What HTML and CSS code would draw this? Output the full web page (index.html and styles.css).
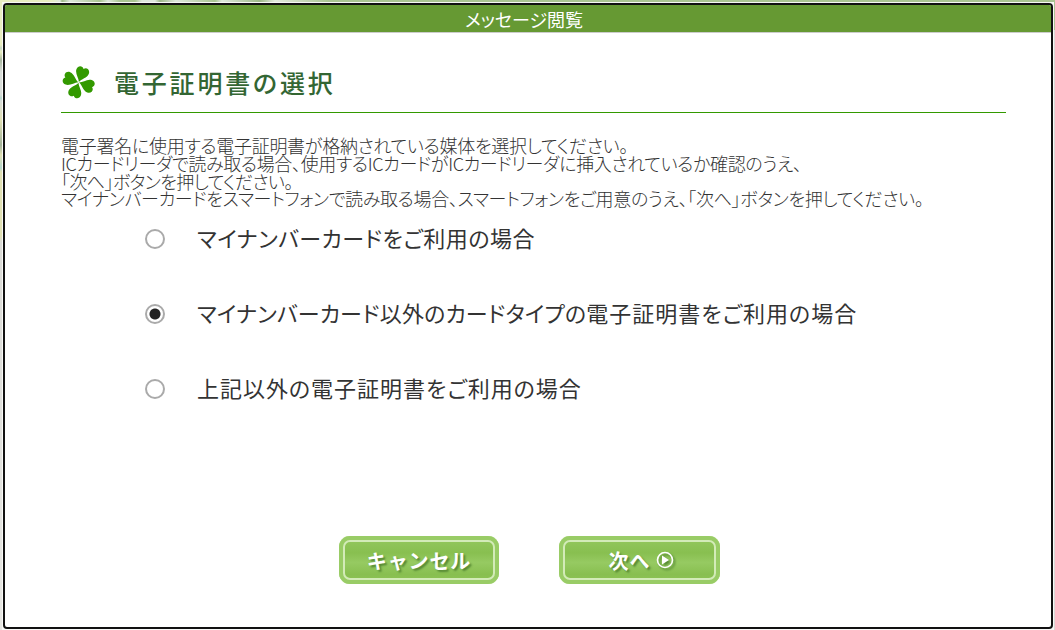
FILE: index.html
```html
<!DOCTYPE html>
<html lang="ja">
    <head>
        <title>メッセージ閲覧</title>
        <meta charset="utf-8">
        <link rel="stylesheet" href="styles.css">
    </head>
    <body>
        <div id="dialog">
            <div class="title_bar"><span>メッセージ閲覧</span></div>
            <div class="content">
                <div class="heading">
                    <svg class="clover" viewBox="0 0 34 34" width="34" height="34">
                        <g transform="translate(17.7 16.3) rotate(20)" fill="#339900">
                            <path id="leaf" d="M0 -0.4 C-1.2 -4 -6.6 -7 -6.6 -11.5 C-6.6 -15.8 -2 -17.2 0 -14.2 C2 -17.2 6.6 -15.8 6.6 -11.5 C6.6 -7 1.2 -4 0 -0.4Z"/>
                            <use href="#leaf" transform="rotate(90)"/>
                            <use href="#leaf" transform="rotate(180)"/>
                            <use href="#leaf" transform="rotate(270)"/>
                        </g>
                    </svg>
                    <h1>電子証明書の選択</h1>
                </div>
                <div class="message">
                    <div class="line1">電子署名に使用する電子証明書が格納されている媒体を選択してください。</div>
                    <div class="line2">ICカードリーダで読み取る場合、使用するICカードがICカードリーダに挿入されているか確認のうえ、</div>
                    <div class="line3">「次へ」ボタンを押してください。</div>
                    <div class="line4">マイナンバーカードをスマートフォンで読み取る場合、スマートフォンをご用意のうえ、「次へ」ボタンを押してください。</div>
                </div>
                <div class="options">
                    <label><input type="radio" name="card"><span class="option1">マイナンバーカードをご利用の場合</span></label>
                    <label><input type="radio" name="card" checked><span class="option2"><span class="card_type">マイナンバーカード以外のカードタイプの</span>電子証明書をご利用の場合</span></label>
                    <label><input type="radio" name="card"><span class="option3">上記以外の電子証明書をご利用の場合</span></label>
                </div>
                <div class="buttons">
                    <button><span class="cancel">キャンセル</span></button>
                    <button class="next"><span>次へ</span>
                        <svg class="arrow" viewBox="0 0 18 18" width="18" height="18">
                            <circle cx="9" cy="9" r="7.5" fill="none" stroke="#fff" stroke-width="1.6"/>
                            <path d="M6 4.5 L13 9 L6 13.5Z" fill="#fff"/>
                        </svg>
                    </button>
                </div>
            </div>
        </div>
    </body>
</html>
```
FILE: styles.css
```css
* {
    box-sizing: border-box;
}
body {
    margin: 0;
    height: 630px;
    padding: 3px 2px 1px 3px;
    overflow: hidden;
    /* edges of the page behind the dialog */
    background: linear-gradient(90deg, #e8edc0 50px, #dfe8dd 60px, #9db889 62px, #dfe8dd 70px, #a9c492 100px, #dfe8dd 108px, #a9c492 120px, #a9c492 135px, #dfe8dd 142px, #dfe8dd 155px, #9db889 160px, #dfe8dd 176px, #a9c492 215px, #dfe8dd 222px, #9db889 260px, #e4ebdf 275px, #a9c492 330px) 0 0 / 1055px 2px no-repeat,
                linear-gradient(#a9c492, #a9c492) 1054px 0 / 1px 30px no-repeat,
                linear-gradient(#e8edc0 0px, #e8edc0 45px, #c5d6c5 48px, #e8edc0 52px, #a9b8a0 60px, #d8dcd8 72px, #d8dcd8 95px, #b5d6cc 98px, #d8dcd8 101px, #e0e0b4 120px, #a3b39a 145px, #e0e0b4 155px, #b5d6cc 168px, #e0e0b4 172px, #e0e0b4 236px, #dadad6 242px, #e6e6e2 630px) 0 0 / 2px 630px no-repeat,
                linear-gradient(#dadad6, #dadad6) 1054px 30px / 1px 600px no-repeat,
                #f8f8f6;
    font-family: "Noto Sans CJK JP", sans-serif;
    font-feature-settings: "palt";
    color: #333;
}
#dialog {
    height: 626px;
    border: 2px solid #111;
    border-radius: 4px;
    background-color: white;
    overflow: hidden;
}
.title_bar {
    height: 28px;
    padding-right: 8px;
    border-bottom: 1px solid #ccc;
    background-color: #669933;
    color: white;
    font-size: 18px;
    line-height: 29px;
    text-align: center;
}
.content {
    padding: 0 45px 0 56px;
}
.heading {
    display: flex;
    align-items: center;
    height: 80px;
    padding-top: 20px;
    border-bottom: 1px solid #339900;
}
h1 {
    margin: 0 0 2px 19px;
    color: #336633;
    font-size: 25px;
    font-weight: 500;
    line-height: 36px;
    letter-spacing: 2.8px;
}
.message {
    padding-top: 24px;
    font-size: 18px;
    font-weight: 300;
    line-height: 17.8px;
    white-space: nowrap;
}
.line1 {
    letter-spacing: -0.28px;
}
.line2 {
    letter-spacing: -0.34px;
}
.line3 {
    letter-spacing: -0.6px;
}
.line4 {
    letter-spacing: -0.32px;
}
.options {
    padding: 13px 0 0 84px;
}
.options label {
    display: flex;
    align-items: center;
    height: 36px;
    margin-bottom: 39px;
    font-size: 22px;
    line-height: 36px;
    white-space: nowrap;
}
.options span {
    padding-bottom: 4px;
    letter-spacing: 0.5px;
}
.options .option2 {
    letter-spacing: 1px;
}
.options .card_type {
    letter-spacing: 0.18px;
}
.options .option3 {
    letter-spacing: 0.98px;
}
input {
    appearance: none;
    width: 20px;
    height: 20px;
    margin: 0 32px 0 0;
    border: 2px solid #aaa;
    border-radius: 50%;
    background: white;
}
input:checked {
    background: radial-gradient(circle at 50% 50%, #222 5px, white 6px);
}
.buttons {
    display: flex;
    gap: 60px;
    padding: 90px 0 0 278px;
}
button {
    display: flex;
    align-items: center;
    justify-content: center;
    width: 160px;
    height: 48px;
    padding: 0;
    border: none;
    border-radius: 11px;
    background: linear-gradient(#95c960, #88bf50 35%, #96ca62 55%, #88bf50 80%, #8ec457);
    box-shadow: inset 0 0 0 4px #99cc66, inset 0 0 0 6px #d3ebb8;
    color: white;
    font-family: inherit;
    font-size: 20px;
    font-weight: bold;
    letter-spacing: 0.9px;
    text-shadow: 2px 2px 2px #558833;
}
.next {
    width: 161px;
    padding-left: 4px;
}
.arrow {
    margin-left: 6px;
    filter: drop-shadow(2px 2px 1px #558833);
}
```
